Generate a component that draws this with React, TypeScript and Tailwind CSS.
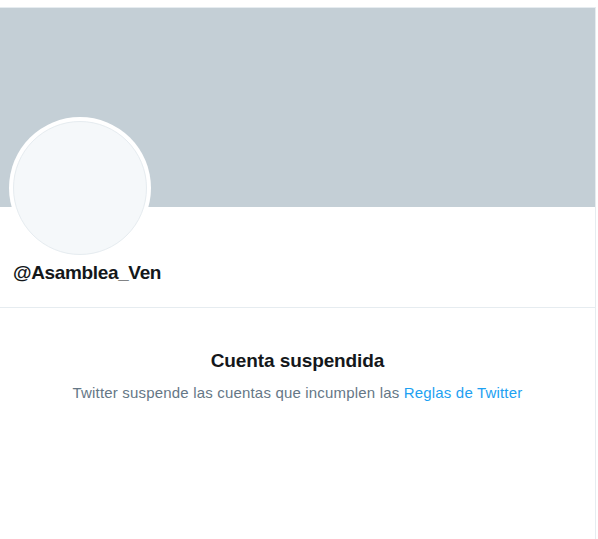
import React from "react";

const SuspendedProfile = () => {
  return (
    <div className="min-h-[539px] bg-white pt-[7px] font-['Liberation_Sans',Arial,sans-serif]">
      <div className="w-[596px] min-h-[532px] border-t border-r border-[#e6ecf0] bg-white">
        {/* banner */}
        <div className="h-[199px] bg-[#c4cfd6]" />

        {/* avatar + handle */}
        <div className="border-b border-[#e6ecf0] pb-[22px]">
          <div className="-mt-[90px] pl-[9px]">
            <div className="h-[142px] w-[142px] rounded-full bg-white p-[4px]">
              <div className="h-full w-full rounded-full border border-[#e6ecf0] bg-[#f5f8fa]" />
            </div>
          </div>
          <p className="mt-[1px] pl-[13px] text-[19px] leading-[25px] font-bold tracking-[-0.35px] text-[#14171a]">
            @Asamblea_Ven
          </p>
        </div>

        {/* message */}
        <div className="flex flex-col items-center pt-[40px]">
          <h2 className="text-[19px] leading-[25px] font-bold tracking-[-0.1px] text-[#14171a]">
            Cuenta suspendida
          </h2>
          <p className="mt-[10px] text-[15px] leading-[20px] tracking-[0.18px] text-[#657786]">
            Twitter suspende las cuentas que incumplen las{" "}
            <a href="#" className="text-[#1da1f2]">
              Reglas de Twitter
            </a>
          </p>
        </div>
      </div>
    </div>
  );
};

export default function App() {
  return <SuspendedProfile />;
}
